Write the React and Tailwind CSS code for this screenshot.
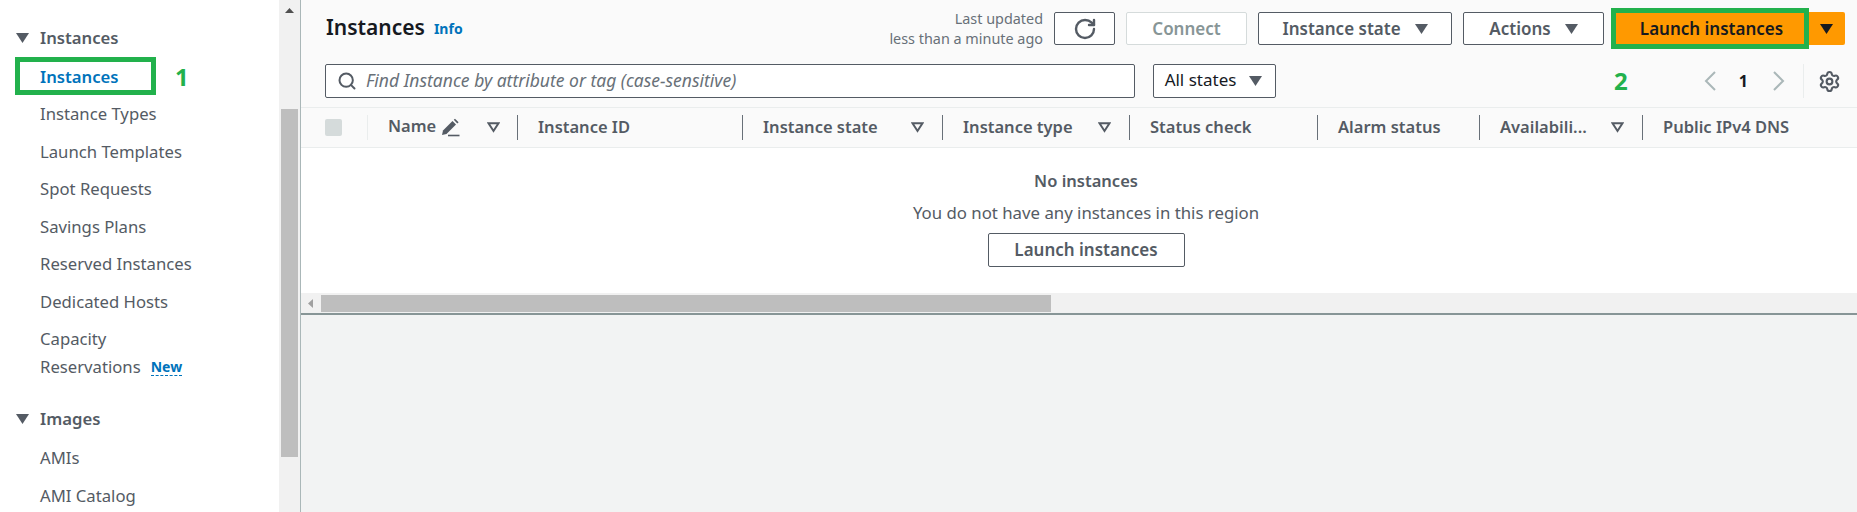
import { Search, RotateCw, Settings } from 'lucide-react';

const navItems = ['Instance Types', 'Launch Templates', 'Spot Requests', 'Savings Plans', 'Reserved Instances', 'Dedicated Hosts'];

// table header: left offset is set by each column's width
const columns = [
  { label: 'Instance ID', width: 'w-[225px]' },
  { label: 'Instance state', width: 'w-[200px]', filter: true },
  { label: 'Instance type', width: 'w-[187px]', filter: true },
  { label: 'Status check', width: 'w-[188px]' },
  { label: 'Alarm status', width: 'w-[162px]' },
  { label: 'Availabili...', width: 'w-[163px]', filter: true },
  { label: 'Public IPv4 DNS', width: 'w-[194px]', last: true },
];

function Caret({ className = '' }) {
  return (
    <svg width="13" height="10" viewBox="0 0 13 10" className={className}>
      <path d="M0 0H13L6.5 10Z" fill="currentColor" />
    </svg>
  );
}

function FilterCaret() {
  return (
    <svg width="13" height="11" viewBox="0 0 13 11" className="shrink-0 text-[#545b64]">
      <path d="M1.5 1.2H11.5L6.5 9Z" fill="none" stroke="currentColor" strokeWidth="2" />
    </svg>
  );
}

function Pencil() {
  return (
    <svg width="19" height="19" viewBox="0 0 19 19" className="text-[#545b64]">
      <path d="M1 17L2 12.5L11.5 3L15 6.5L5.5 16Z" fill="currentColor" />
      <path d="M12.8 1.8L14 .8L17.6 4.2L16.3 5.4Z" fill="currentColor" />
      <path d="M7 17.5H18.5" stroke="currentColor" strokeWidth="1.6" />
    </svg>
  );
}

function Chevron({ flip = false }) {
  return (
    <svg width="13" height="22" viewBox="0 0 13 22" className="text-[#aab7b8]">
      <path d={flip ? 'M2 2L11 11L2 20' : 'M11 2L2 11L11 20'} fill="none" stroke="currentColor" strokeWidth="2" />
    </svg>
  );
}

function ToolButton({ className = '', tall = false, children }) {
  return (
    <button className={`flex items-center justify-center rounded-[2px] border border-[#545b64] bg-white text-[17px] font-semibold text-[#545b64] ${tall ? 'h-[34px]' : 'h-[33px]'} ${className}`}>
      {children}
    </button>
  );
}

function Sidebar() {
  return (
    <aside className="relative flex h-[512px] w-[301px] shrink-0 overflow-hidden border-r border-[#aab7b8] bg-white">
      <div className="w-[279px] shrink-0 pt-[24px] text-[16.7px] text-[#545b64]">
        <div className="flex h-[28px] items-center pl-[16px] font-semibold">
          <Caret className="mr-[11px]" />
          Instances
        </div>
        <div className="mt-[11px] flex h-[28px] items-center pl-[40px] font-semibold text-[#0073bb]">Instances</div>
        <div className="mt-[8.8px] flex flex-col gap-[9.5px] pl-[40px]">
          {navItems.map((item) => (
            <div key={item} className="flex h-[28px] items-center">{item}</div>
          ))}
          <div className="leading-[28px]">
            <div>Capacity</div>
            <div className="flex items-center">
              Reservations
              <span className="ml-[10px] border-b border-dashed border-[#0073bb] text-[14px] leading-[17px] font-bold text-[#0073bb]">New</span>
            </div>
          </div>
        </div>
        <div className="mt-[24px] flex h-[28px] items-center pl-[16px] font-semibold">
          <Caret className="mr-[11px]" />
          Images
        </div>
        <div className="mt-[11px] flex flex-col gap-[9.5px] pl-[40px]">
          <div className="flex h-[28px] items-center">AMIs</div>
          <div className="flex h-[28px] items-center">AMI Catalog</div>
        </div>
      </div>
      <div className="flex w-[21px] flex-col items-center bg-[#f1f1f1] pt-[8px]">
        <svg width="9" height="5" viewBox="0 0 9 5" className="text-[#505050]"><path d="M0 5L4.5 0L9 5Z" fill="currentColor" /></svg>
        <div className="mt-[96px] h-[348px] w-[17px] bg-[#bebebe]" />
      </div>
      <span className="absolute top-[57px] left-[15px] h-[38px] w-[141px] border-[5px] border-[#22b14c]" />
      <span className="absolute top-[61px] left-[175px] text-[24px] leading-[32px] font-bold text-[#22b14c]">1</span>
    </aside>
  );
}

function Toolbar() {
  return (
    <div className="relative h-[108px] border-b border-[#eaeded] bg-[#fafafa] pt-[12px] pl-[24px]">
      <div className="flex h-[33px] items-center">
        <h1 className="-mt-[2px] ml-px text-[21px] leading-[33px] font-semibold text-[#16191f]">Instances</h1>
        <a className="ml-[9px] text-[14px] font-bold text-[#0073bb]">Info</a>
        <div className="mr-[11px] ml-auto text-right text-[14.4px] leading-[20px] text-[#687078]">
          <div>Last updated</div>
          <div>less than a minute ago</div>
        </div>
        <ToolButton className="w-[61px]"><RotateCw size={24} strokeWidth={2.4} /></ToolButton>
        <button className="ml-[11px] h-[33px] w-[121px] rounded-[2px] border border-[#d5dbdb] bg-white text-[17px] font-semibold text-[#879596]">Connect</button>
        <ToolButton className="ml-[11px] w-[194px] gap-[14px]">Instance state<Caret /></ToolButton>
        <ToolButton className="ml-[11px] w-[141px] gap-[14px]">Actions<Caret /></ToolButton>
        <button className="relative ml-[11px] h-[33px] w-[193px] bg-[#ff9900] text-[17px] font-semibold text-[#16191f]">
          Launch instances
          <span className="absolute -top-[4px] -right-[1px] -bottom-[4px] -left-[4px] border-[5px] border-[#22b14c]" />
        </button>
        <button className="mr-[12px] flex h-[33px] w-[37px] items-center justify-center rounded-r-[2px] bg-[#ff9900] text-[#16191f]"><Caret /></button>
      </div>
      <div className="mt-[19px] flex h-[34px] items-center">
        <div className="flex h-[34px] w-[810px] items-center rounded-[2px] border border-[#545b64] bg-white pb-[2px] pl-[11px] text-[17.5px] text-[#687078] italic">
          <Search size={20} strokeWidth={2.4} className="mt-[2px] mr-[9px] text-[#545b64]" />
          Find Instance by attribute or tag (case-sensitive)
        </div>
        <button className="ml-[18px] flex h-[34px] w-[123px] items-center justify-center gap-[13px] rounded-[2px] border border-[#545b64] bg-white pr-[2px] pb-[2px] text-[17px] text-[#16191f]">
          All states<Caret className="mt-[2px] text-[#545b64]" />
        </button>
        <span className="ml-[338px] text-[24px] font-bold text-[#22b14c]">2</span>
        <span className="ml-[76px] flex"><Chevron /></span>
        <span className="ml-[22px] w-[12px] text-[16px] font-bold text-[#16191f]">1</span>
        <span className="ml-[21px] flex"><Chevron flip /></span>
        <span className="ml-[18px] h-[34px] w-px bg-[#eaeded]" />
        <Settings size={23} strokeWidth={2.2} className="ml-[14px] text-[#545b64]" />
      </div>
    </div>
  );
}

function TableHead() {
  return (
    <div className="flex h-[40px] items-center border-b border-[#eaeded] bg-[#fafafa] pl-[24px] text-[16.5px] font-semibold text-[#545b64]">
      <span className="h-[17px] w-[17px] rounded-[2px] bg-[#d5dbdb]" />
      <span className="ml-[25px] h-[25px] w-px bg-[#eaeded]" />
      <div className="flex w-[149px] items-center pl-[20px]">
        <span className="-mt-[2px]">Name</span>
        <span className="ml-[5px]"><Pencil /></span>
        <span className="ml-[27px]"><FilterCaret /></span>
      </div>
      {columns.map((col) => (
        <div key={col.label} className={`flex items-center ${col.width}`}>
          <span className="h-[25px] w-px bg-[#687078]" />
          <span className="ml-[20px] whitespace-nowrap">{col.label}</span>
          {col.filter && <span className="mr-[18px] ml-auto flex"><FilterCaret /></span>}
        </div>
      ))}
    </div>
  );
}

export default function App() {
  return (
    <div className="flex h-[512px] w-[1857px] overflow-hidden bg-[#f2f3f3] font-['Noto_Sans',sans-serif]">
      <Sidebar />
      <main className="flex min-w-0 flex-1 flex-col">
        <Toolbar />
        <TableHead />
        <div className="flex h-[145px] flex-col items-center bg-white pt-[22px] pl-[14px]">
          <div className="text-[16.5px] leading-[22px] font-semibold text-[#545b64]">No instances</div>
          <div className="mt-[10px] text-[16.8px] leading-[22px] text-[#545b64]">You do not have any instances in this region</div>
          <ToolButton tall className="mt-[9px] w-[197px]">Launch instances</ToolButton>
        </div>
        <div className="flex h-[22px] items-center border-b-2 border-[#879596] bg-[#f1f1f1]">
          <svg width="5" height="9" viewBox="0 0 5 9" className="ml-[7px] text-[#a0a0a0]"><path d="M5 0L0 4.5L5 9Z" fill="currentColor" /></svg>
          <div className="ml-[8px] h-[17px] w-[730px] bg-[#bebebe]" />
        </div>
      </main>
    </div>
  );
}
